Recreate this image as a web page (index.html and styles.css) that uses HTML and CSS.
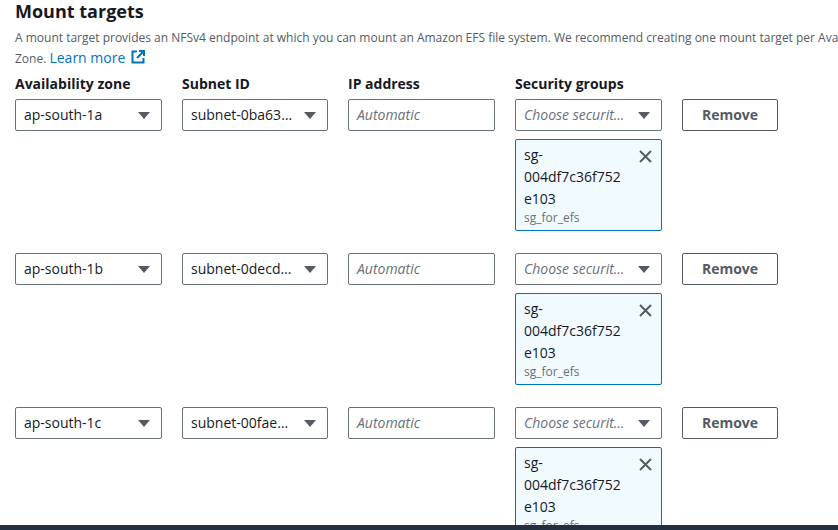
FILE: index.html
```html
<!DOCTYPE html>
<html>
<head>
<meta charset="utf-8">
<link rel="stylesheet" href="styles.css">
</head>
<body>
<div class="page">
  <section class="panel">
    <h2 class="title">Mount targets</h2>
    <p class="desc">A mount target provides an NFSv4 endpoint at which you can mount an Amazon EFS file system. We recommend creating one mount target per Availability Zone. <a class="link" href="#">Learn more <svg class="ext" width="14" height="14" viewBox="0 0 14 14"><path d="M6 1.5H1.5v11h11V8" fill="none" stroke="#0073bb" stroke-width="2"/><path d="M8 1h5v5" fill="none" stroke="#0073bb" stroke-width="2"/><path d="M13 1L6 8" stroke="#0073bb" stroke-width="2.2"/></svg></a></p>

    <div class="grid">
      <div class="head">Availability zone</div>
      <div class="head">Subnet ID</div>
      <div class="head">IP address</div>
      <div class="head">Security groups</div>
      <div class="head"></div>
    </div>

    <div class="rows">
      <div class="grid row">
        <div class="select"><span class="val">ap-south-1a</span><span class="caret"></span></div>
        <div class="select"><span class="val">subnet-0ba63c1f2e9a7d4b</span><span class="caret"></span></div>
        <div class="input">Automatic</div>
        <div class="sgcol">
          <div class="select"><span class="val ph">Choose security groups</span><span class="caret"></span></div>
          <div class="token">
            <div class="tok-text">sg-<br>004df7c36f752<br>e103</div>
            <div class="tok-tag">sg_for_efs</div>
            <svg class="x" width="13" height="13" viewBox="0 0 13 13"><path d="M1 1l11 11M12 1L1 12" stroke="#545b64" stroke-width="2"/></svg>
          </div>
        </div>
        <div class="btn">Remove</div>
      </div>

      <div class="grid row">
        <div class="select"><span class="val">ap-south-1b</span><span class="caret"></span></div>
        <div class="select"><span class="val">subnet-0decd7a21b3c4e5f</span><span class="caret"></span></div>
        <div class="input">Automatic</div>
        <div class="sgcol">
          <div class="select"><span class="val ph">Choose security groups</span><span class="caret"></span></div>
          <div class="token">
            <div class="tok-text">sg-<br>004df7c36f752<br>e103</div>
            <div class="tok-tag">sg_for_efs</div>
            <svg class="x" width="13" height="13" viewBox="0 0 13 13"><path d="M1 1l11 11M12 1L1 12" stroke="#545b64" stroke-width="2"/></svg>
          </div>
        </div>
        <div class="btn">Remove</div>
      </div>

      <div class="grid row">
        <div class="select"><span class="val">ap-south-1c</span><span class="caret"></span></div>
        <div class="select"><span class="val">subnet-00fae81c2d3b4a5e</span><span class="caret"></span></div>
        <div class="input">Automatic</div>
        <div class="sgcol">
          <div class="select"><span class="val ph">Choose security groups</span><span class="caret"></span></div>
          <div class="token">
            <div class="tok-text">sg-<br>004df7c36f752<br>e103</div>
            <div class="tok-tag">sg_for_efs</div>
            <svg class="x" width="13" height="13" viewBox="0 0 13 13"><path d="M1 1l11 11M12 1L1 12" stroke="#545b64" stroke-width="2"/></svg>
          </div>
        </div>
        <div class="btn">Remove</div>
      </div>
    </div>
  </section>
  <div class="footer"></div>
</div>
</body>
</html>
```
FILE: styles.css
```css
html, body {
  margin: 0;
  padding: 0;
  background: #ffffff;
  overflow: hidden;
}
body {
  width: 838px;
  height: 530px;
  font-family: "Open Sans", "Noto Sans", sans-serif;
  color: #16191f;
  position: relative;
}
.page {
  width: 838px;
  height: 530px;
  overflow: hidden;
  position: relative;
}
.panel {
  width: 930px;
  padding-left: 15px;
}
.title {
  margin: 0;
  font-size: 18px;
  line-height: 22px;
  font-weight: 700;
  color: #16191f;
}
.desc {
  margin: 6px 0 0 0;
  font-size: 12px;
  line-height: 20px;
  color: #545b64;
  width: 885px;
}
.link {
  color: #0073bb;
  font-size: 14px;
  text-decoration: none;
}
.ext {
  vertical-align: -1px;
  margin-left: 2px;
}
.grid {
  display: grid;
  grid-template-columns: 147px 146px 147px 147px 96px;
  column-gap: 20px;
  align-items: start;
}
.head {
  margin-top: 5px;
  font-size: 14px;
  font-weight: 700;
  line-height: 20px;
  margin-bottom: 5px;
}
.rows {
  display: flex;
  flex-direction: column;
  gap: 22px;
}
.select, .input, .btn {
  box-sizing: border-box;
  height: 32px;
  border: 1px solid #687078;
  border-radius: 2px;
  font-size: 14px;
  line-height: 30px;
}
.select {
  display: flex;
  align-items: center;
  padding: 0 11px 0 8px;
  gap: 8px;
}
.val {
  flex: 1;
  min-width: 0;
  white-space: nowrap;
  overflow: hidden;
  text-overflow: ellipsis;
}
.ph {
  font-style: italic;
  color: #687078;
}
.caret {
  width: 0;
  height: 0;
  border-left: 6px solid transparent;
  border-right: 6px solid transparent;
  border-top: 7px solid #545b64;
  flex: none;
}
.input {
  padding-left: 8px;
  font-style: italic;
  color: #687078;
}
.sgcol {
  display: flex;
  flex-direction: column;
  gap: 8px;
}
.token {
  position: relative;
  box-sizing: border-box;
  height: 92px;
  border: 1px solid #0073bb;
  border-radius: 2px;
  background: #f1faff;
  padding: 4px 8px;
}
.tok-text {
  font-size: 14px;
  line-height: 22px;
  color: #16191f;
}
.tok-tag {
  font-size: 12px;
  line-height: 16px;
  color: #687078;
}
.x {
  position: absolute;
  top: 10px;
  right: 9px;
}
.btn {
  border-color: #545b64;
  text-align: center;
  font-weight: 700;
  color: #545b64;
}
.footer {
  position: absolute;
  left: 0;
  right: 0;
  bottom: 0;
  height: 5px;
  background: #232f3e;
}
```
